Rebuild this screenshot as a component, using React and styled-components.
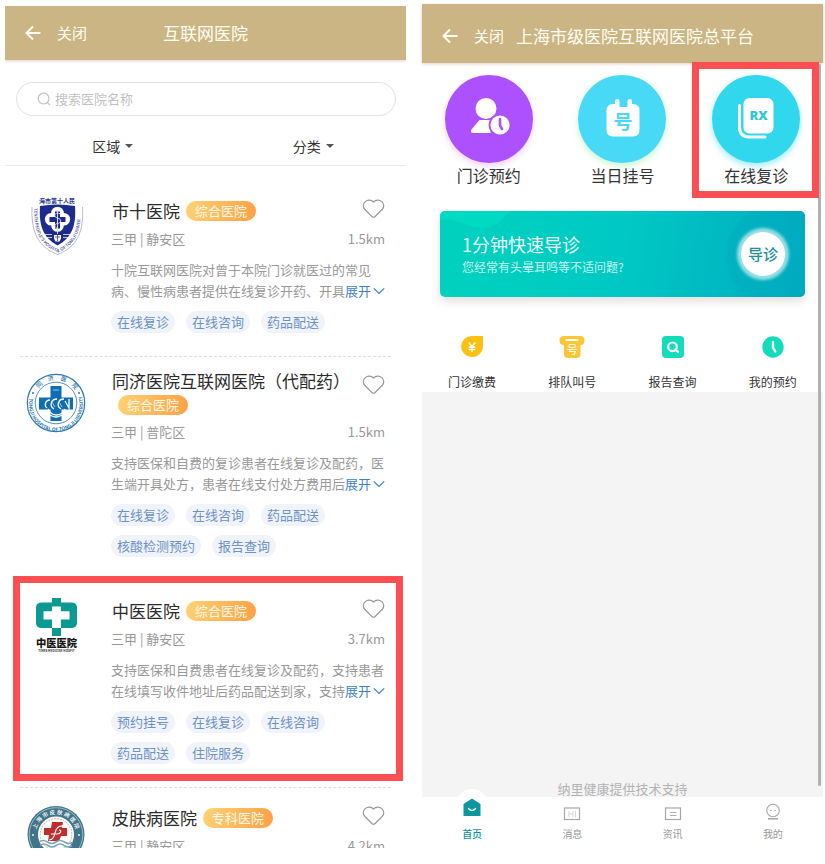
import React, { useState } from 'react';
import styled, { createGlobalStyle, css } from 'styled-components';

const GlobalStyle = createGlobalStyle`
  * {
    box-sizing: border-box;
  }
  body {
    margin: 0;
    background-color: #fff;
    color: #333;
    font-family: 'Noto Sans CJK SC', 'Noto Sans', sans-serif;
  }
  h1, h2, p, ul {
    margin: 0;
    padding: 0;
    font-weight: 400;
  }
  li {
    list-style: none;
  }
  a {
    color: inherit;
    text-decoration: none;
  }
  button, input, select {
    font: inherit;
    color: inherit;
    background: none;
    border: none;
    padding: 0;
    margin: 0;
  }
  button {
    cursor: pointer;
  }
  svg {
    display: block;
  }
`;

const Page = styled.main`
  display: grid;
  grid-template-columns: 1fr 1fr;
  gap: 16px;
  align-items: start;
  min-height: 100vh;
  padding: 0 2px 0 5px;
`;

const Phone = styled.section`
  display: flex;
  flex-direction: column;
  min-width: 0;
  ${(props) =>
    props.$clipped
      ? css`
          height: calc(100vh - 22px);
          margin-top: 6px;
          overflow: hidden;
        `
      : css`
          min-height: calc(100vh - 4px);
          margin-top: 4px;
        `}
`;

const TopBar = styled.header`
  position: relative;
  z-index: 1;
  display: grid;
  grid-template-columns: ${(props) => (props.$centered ? '1fr auto 1fr' : 'auto 1fr')};
  column-gap: 12px;
  align-items: center;
  flex-shrink: 0;
  height: ${(props) => (props.$centered ? 54 : 59)}px;
  padding: ${(props) => (props.$centered ? '0 20px' : '4px 20px 0')};
  background-color: #cbb584;
  color: #fffdf2;
  box-shadow: 0 1px 3px rgba(160, 120, 90, 0.35);
`;

const BarActions = styled.div`
  display: flex;
  align-items: center;
  gap: 16px;
  button {
    font-size: 15px;
    line-height: 22px;
  }
`;

const BarTitle = styled.h1`
  font-size: 17px;
  line-height: 24px;
  white-space: nowrap;
`;

const SearchBox = styled.label`
  display: flex;
  align-items: center;
  gap: 4px;
  flex-shrink: 0;
  height: 34px;
  margin: 22px 10px 0 11px;
  padding: 0 20px;
  border: 1px solid #e2e2e2;
  border-radius: 17px;
`;

const SearchInput = styled.input`
  flex: 1;
  min-width: 0;
  font-size: 13px;
  line-height: 20px;
  outline: none;
  &::placeholder {
    color: #c2c2c2;
    opacity: 1;
  }
`;

const Filters = styled.div`
  display: grid;
  grid-template-columns: 1fr 1fr;
  flex-shrink: 0;
  height: 50px;
  padding-top: 11px;
  border-bottom: 1px solid #e9e9e9;
`;

const FilterLabel = styled.label`
  display: flex;
  justify-content: center;
  align-items: center;
  height: 38px;
  padding-left: 15px;
`;

const FilterSelect = styled.select`
  appearance: none;
  padding-right: 13px;
  font-size: 14px;
  line-height: 20px;
  cursor: pointer;
`;

const Caret = styled.span`
  width: 0;
  margin-left: -8px;
  border: 4px solid transparent;
  border-top: 4px solid #555;
  border-bottom: none;
  pointer-events: none;
`;

const HospitalList = styled.ul`
  flex-shrink: 0;
  padding: 15px 15px 0;
`;

const HospitalItem = styled.li`
  position: relative;
  display: flex;
  gap: 25px;
  padding: 12px 6px 23px;
  border-bottom: 1px dashed #dedede;
`;

const Logo = styled.svg`
  flex: 0 0 60px;
  width: 60px;
  height: 60px;
  margin-top: 4px;
  overflow: visible;
  font-family: 'Noto Sans CJK SC', sans-serif;
`;

const Info = styled.div`
  flex: 1;
  min-width: 0;
`;

const Head = styled.div`
  display: flex;
  justify-content: space-between;
`;

const Names = styled.div`
  display: flex;
  flex-wrap: wrap;
  align-items: center;
  padding-left: 1px;
  padding-top: ${(props) => (props.$wrapped ? 0 : 6)}px;
  margin-bottom: ${(props) => (props.$wrapped ? 5 : 6)}px;
`;

const Name = styled.h2`
  font-size: 17px;
  line-height: 24px;
  color: #2b2b2b;
  white-space: nowrap;
`;

const Badge = styled.span`
  height: 20px;
  margin: 2px 0 2px 6px;
  padding: 0 9px;
  border-radius: 10px;
  background-image: linear-gradient(100deg, #ffd274, #ffa046);
  color: #fffbea;
  font-size: 13px;
  line-height: 19px;
`;

const Like = styled.button`
  align-self: flex-start;
  margin-top: 6px;
`;

const Meta = styled.div`
  display: flex;
  justify-content: space-between;
  color: #999;
  font-size: 13px;
  line-height: 20px;
`;

const Desc = styled.div`
  position: relative;
  margin-top: 10px;
  color: #999;
  font-size: 13px;
  line-height: 21px;
`;

const Expand = styled.button`
  position: absolute;
  right: 0;
  bottom: 0;
  display: flex;
  align-items: center;
  gap: 2px;
  background-color: #fff;
  color: #3c7fd0;
`;

const Tags = styled.ul`
  display: flex;
  flex-wrap: wrap;
  gap: 9px 11px;
  margin-top: 10px;
`;

const Tag = styled.li`
  padding: 0 6px;
  border-radius: 11px;
  background-color: #f1f3fa;
  color: #6b92c8;
  font-size: 13px;
  line-height: 22px;
`;

// red frame drawn over the thing the reader should tap
const Frame = styled.span`
  position: absolute;
  inset: ${(props) => props.$inset};
  z-index: 2;
  border: 7px solid #fc4f54;
  pointer-events: none;
`;

const Content = styled.div`
  position: relative;
  flex: 1;
  display: flex;
  flex-direction: column;
  justify-content: space-between;
  background-color: #f4f4f4;
`;

const Panel = styled.div`
  padding-bottom: 1px;
  background-color: #fff;
`;

const ScrollThumb = styled.span`
  position: absolute;
  top: 1px;
  right: 2px;
  bottom: 11px;
  width: 3px;
  border-radius: 2px;
  background-color: #b1b1b3;
`;

const Entries = styled.nav`
  display: grid;
  grid-template-columns: repeat(3, 1fr);
  padding-top: 12px;
`;

const Entry = styled.a`
  position: relative;
  display: flex;
  flex-direction: column;
  align-items: center;
  gap: 2px;
  font-size: 16px;
  line-height: 20px;
`;

const Disc = styled.span`
  display: block;
  width: 88px;
  height: 88px;
  border-radius: 50%;
  background-color: ${(props) => props.$color};
  box-shadow: 0 3px 6px ${(props) => props.$glow};
`;

const Banner = styled.section`
  position: relative;
  display: flex;
  justify-content: space-between;
  align-items: center;
  margin: 26px 18px 0;
  padding: 21px 20px 21px 22px;
  border-radius: 5px;
  background-image: linear-gradient(100deg, #00d5bf, #00c8c4 50%, #00abc0);
  box-shadow: 0 5px 9px rgba(120, 90, 90, 0.18);
  color: #effffc;
  overflow: hidden;
`;

const Waves = styled.svg`
  position: absolute;
  inset: 0;
  width: 100%;
  height: 100%;
`;

const BannerText = styled.div`
  position: relative;
  h2 {
    font-size: 18px;
    line-height: 24px;
  }
  p {
    margin-top: 2px;
    font-size: 12px;
    line-height: 18px;
    color: #c9f6f0;
  }
`;

const GuideButton = styled.button`
  position: relative;
  width: 44px;
  height: 44px;
  border-radius: 50%;
  background-color: #fff;
  box-shadow: 0 0 3px 4px rgba(255, 255, 255, 0.6);
  color: #1e9297;
  font-size: 15px;
  font-weight: 500;
  line-height: 44px;
  white-space: nowrap;
`;

const Services = styled.nav`
  display: grid;
  grid-template-columns: repeat(4, 1fr);
  padding-top: 38px;
`;

const Service = styled.a`
  display: flex;
  flex-direction: column;
  align-items: center;
  gap: 14px;
  font-size: 12px;
  line-height: 18px;
`;

const Support = styled.p`
  text-align: center;
  color: #b3b3b3;
  font-size: 13px;
  line-height: 16px;
`;

const TabBar = styled.nav`
  display: grid;
  grid-template-columns: repeat(4, 1fr);
  height: 67px;
  padding-top: 4px;
  background-color: #fff;
`;

const Tab = styled.a`
  position: relative;
  display: flex;
  flex-direction: column;
  align-items: center;
  gap: 2px;
  color: #999;
  font-size: 10px;
  line-height: 14px;

  svg {
    position: relative;
    overflow: visible;
  }

  ${(props) =>
    props.$active &&
    css`
      color: #0b979d;
      font-weight: 500;
      &::before {
        content: '';
        position: absolute;
        top: -12px;
        width: 34px;
        height: 34px;
        border-radius: 50%;
        background-color: #fff;
      }
    `}
`;

const BackIcon = () => (
  <svg width="16" height="16" viewBox="0 0 16 16" fill="none" stroke="currentColor" strokeWidth="2">
    <path d="M15.5 8H1.8M8 1.5 1.5 8 8 14.5" />
  </svg>
);

const SearchIcon = () => (
  <svg width="14" height="14" viewBox="0 0 14 14" fill="none" stroke="#c2c2c2" strokeWidth="1.2">
    <circle cx="6.6" cy="6.6" r="5.4" />
    <path d="m10.4 10.6 2.4 2.4" />
  </svg>
);

const HeartIcon = () => (
  <svg width="23" height="20" viewBox="0 0 23 20" fill="none" stroke="#999" strokeWidth="1.2">
    <path
      d="M11.5 3C9.3.7 5.700.5 3.200 2.600.7 4.900.6 8.200 2.900 10.500l7 7c.9.8 2.300.8 3.200 0l7-7c2.300-2.300 2.200-5.600-.3-7.900C17.300.5 13.700.7 11.500 3Z"
      strokeLinejoin="round"
    />
  </svg>
);

const ChevronIcon = () => (
  <svg width="12" height="8" viewBox="0 0 12 8" fill="none" stroke="currentColor" strokeWidth="1.2">
    <path d="m.8 1.300 5.200 5.200 5.200-5.200" />
  </svg>
);

const ShiyuanLogo = () => (
  <Logo viewBox="0 0 60 60">
    <defs>
      <path id="shieldSide" d="M8.300 11C7.500 33 13 48 32 55.500 50 48 56 33 54.700 9" />
    </defs>
    <text x="31" y="6" fontSize="6" fontWeight="700" textAnchor="middle" fill="#27368a">
      海市第十人民
    </text>
    <path d="M6 10C5 35 12 50 31.500 57.500 51 50 58 35 56.500 10" fill="none" stroke="#98a1ca" strokeWidth=".7" />
    <text fontSize="4.300" fontWeight="500" fill="#3d4b98">
      <textPath href="#shieldSide">TENTH PEOPLE'S HOSPITAL OF TONGJI UNIVER</textPath>
    </text>
    <path d="M14 9q17.500-3 35 0c1.200 19-2.500 31-17.500 39.500C16.500 40 12.800 28 14 9Z" fill="#1c2b8c" />
    <g fill="#fff">
      <circle cx="31.500" cy="16" r="6.300" />
      <circle cx="31.500" cy="28.500" r="6.300" />
      <circle cx="25.200" cy="22.200" r="6.300" />
      <circle cx="37.800" cy="22.200" r="6.300" />
      <path d="M28 38h7v3.500l-1.500 3h-4l-1.500-3ZM18 37h8v.8h-8zM37 37h8v.8h-8zM20 40h6v.8h-6zM37 40h6v.8h-6z" />
    </g>
    <path d="M29 14.500h5v5.500h5.500v5H34v6.500h-5V25h-5.500v-5H29Z" fill="#1c2b8c" />
    <path
      d="M31.500 13v24M35 17c-7-3-8 3-3.500 4s4 5 0 5.500-3 4 0 5"
      fill="none"
      stroke="#d4dbf8"
      strokeWidth="1"
    />
    <path d="M29 40h5M31.500 38v6" stroke="#1c2b8c" strokeWidth=".7" />
  </Logo>
);

const TongjiLogo = () => (
  <Logo viewBox="0 0 60 60">
    <defs>
      <path id="tongjiTop" d="M11.500 17A22.500 22.500 0 0 1 49 17" />
      <path id="tongjiBottom" d="M4.800 21.500A27 27 0 1 0 55.200 21.500" />
    </defs>
    <g fill="none" stroke="#2d79ad">
      <circle cx="30" cy="30" r="28.700" strokeWidth="1.200" />
      <circle cx="30" cy="30" r="20.800" strokeWidth=".8" />
    </g>
    <text fontSize="6" fontWeight="500" fill="#2d79ad">
      <textPath href="#tongjiTop" startOffset="2">
        同　济　医　院
      </textPath>
    </text>
    <text fontSize="4.800" fontWeight="700" fill="#2d79ad">
      <textPath href="#tongjiBottom" startOffset="4">
        TONGJI HOSPITAL OF TONGJI UNIVERSITY
      </textPath>
    </text>
    <circle cx="7" cy="20" r="1" fill="#2d79ad" />
    <circle cx="53" cy="20" r="1" fill="#2d79ad" />
    <path d="M24.500 13h11v11.500H47v12H35.500V48h-11V36.500H13v-12h11.500Z" fill="#0e6db4" />
    <g fill="none" stroke="#fff" strokeWidth="1.300">
      <path d="M24 27c-5 0-6 6-3 8M31 26c-6 0-8 7-3 10M38 26c-6 0-8 7-3 10M43 26v9l-4-7M22 36c4 8 13 8 17 0M24 42q6 4 12 0" />
    </g>
    <path d="M27 17h6M26 29l3 5M33 29l3 5" stroke="#9cc8e6" strokeWidth="1" />
  </Logo>
);

const ZhongyiLogo = () => (
  <Logo viewBox="0 0 60 60">
    <path
      d="M26 1h9v4.500h10q6 0 6 5V26q0 5-6 5H35v8h-9v-8H16q-6 0-6-5V10.500q0-5 6-5h10Z"
      fill="#0b9a92"
    />
    <path d="M26 9.500h9v4.800h8.500v8.200H35V31h-9v-8.500h-8.500v-8.200H26Z" fill="#fff" />
    <text x="30.500" y="50" fontSize="10.300" fontWeight="900" textAnchor="middle" fill="#171717">
      中医医院
    </text>
    <text x="30.500" y="54.500" fontSize="3" fontWeight="700" textAnchor="middle" fill="#333">
      TIMES MEDICINE HOSPIT
    </text>
  </Logo>
);

const PifuLogo = () => (
  <Logo viewBox="0 0 60 60">
    <defs>
      <path id="pifuTop" d="M10.500 37A20.500 20.500 0 1 1 49.500 37" />
    </defs>
    <circle cx="30" cy="30.500" r="28.500" fill="#3f7489" />
    <circle cx="30" cy="30.500" r="26.800" fill="none" stroke="#c6d8df" strokeWidth=".7" />
    <circle cx="30" cy="30.500" r="18" fill="#fff" />
    <circle cx="30" cy="30.500" r="15.800" fill="none" stroke="#c8b98a" strokeWidth="1" strokeDasharray="2 1" />
    <text fontSize="5.600" fontWeight="500" fill="#fff" textAnchor="middle">
      <textPath href="#pifuTop" startOffset="50%">
        上 海 市 皮 肤 病 医 院
      </textPath>
    </text>
    <circle cx="7" cy="31" r=".9" fill="#fff" />
    <circle cx="53" cy="31" r=".9" fill="#fff" />
    <path d="M26 18h11l-1 6h5v8h-6l-2 5H22l1-6h-5v-7h7Z" fill="#c02d2c" />
    <path d="M38 22c-5-1-8 2-9 7s-3 7-6 7M25 30h6c4 0 5-4 2-4" fill="none" stroke="#fff" strokeWidth="1.200" />
    <path
      d="M13 38q4-3 8.500 0t8.500 0 8.500 0 8.500 0M14 41.500q4-3 8 0t8 0 8 0 8 0"
      fill="none"
      stroke="#7ba7b8"
      strokeWidth="1.600"
    />
  </Logo>
);

const BookIcon = () => (
  <svg width="88" height="88" viewBox="0 0 88 88" fill="#fff">
    <circle cx="41" cy="33.500" r="10.500" />
    <path d="M34.500 45h13l-2 13H28.500q-3.500 0-2-3.500Z" strokeLinejoin="round" />
    <circle cx="55" cy="50" r="10.500" stroke="#ad50fd" strokeWidth="1.800" />
    <path d="M55 44v6.500l2 3.500" fill="none" stroke="#ad50fd" strokeWidth="2.600" strokeLinecap="round" />
  </svg>
);

const TodayIcon = () => (
  <svg width="88" height="88" viewBox="0 0 88 88">
    <rect x="37" y="24" width="4.500" height="10" rx="2.200" fill="#fff" />
    <rect x="49.500" y="24" width="4.500" height="10" rx="2.200" fill="#fff" />
    <path d="M35 29h3.500q.5 3 3 3h7q2.500 0 3-3H55q6.500 0 6.500 6.500v19q0 7-6.500 7H35q-6.500 0-6.500-7v-19Q28.500 29 35 29Z" fill="#fff" />
    <text x="45" y="54" fontSize="19" fontWeight="700" textAnchor="middle" fill="#48d9f7">
      号
    </text>
  </svg>
);

const RxIcon = () => (
  <svg width="88" height="88" viewBox="0 0 88 88">
    <rect x="31.500" y="23" width="30" height="35.500" rx="6" fill="#fff" />
    <path d="M27.500 30.500V52q0 10 10 10h15.500" fill="none" stroke="#fff" strokeWidth="3" strokeLinecap="round" />
    <text
      x="46.500"
      y="45"
      fontSize="13"
      fontWeight="900"
      textAnchor="middle"
      fill="#31c5d8"
      fontFamily="'Open Sans', 'DejaVu Sans', sans-serif"
    >
      RX
    </text>
  </svg>
);

const PayIcon = () => (
  <svg width="24" height="24" viewBox="0 0 24 24">
    <path d="M12 1h11v11.500A11 10.500 0 1 1 12 1Z" fill="#fcc011" />
    <path d="m8.700 7.500 3.300 4 3.300-4M12 11.500v5.500M8.700 12h6.600M8.700 14.500h6.600" fill="none" stroke="#fff" strokeWidth="1.400" />
  </svg>
);

const QueueIcon = () => (
  <svg width="26" height="24" viewBox="0 0 26 24">
    <path d="M5 1h16q4.500 0 4.500 4.500T21.500 10v9q0 4-4 4H9q-4 0-4-4v-9Q.5 10 .5 5.500T5 1Z" fill="#fcc636" />
    <path d="M7.500 5h11" stroke="#fff" strokeWidth="2" strokeLinecap="round" />
    <text x="13.200" y="18.500" fontSize="11" textAnchor="middle" fill="#fff">
      号
    </text>
  </svg>
);

const ReportIcon = () => (
  <svg width="24" height="24" viewBox="0 0 24 24" fill="none">
    <rect x="1" y="1" width="22" height="22" rx="4" fill="#13dcbb" />
    <circle cx="11.500" cy="11.800" r="4.300" stroke="#fff" strokeWidth="2.200" />
    <path d="m14.500 14.500 2.500 2.500" stroke="#fff" strokeWidth="2.200" strokeLinecap="round" />
  </svg>
);

const ClockIcon = () => (
  <svg width="24" height="24" viewBox="0 0 24 24" fill="none">
    <circle cx="12" cy="12" r="10.700" fill="#13dcbb" />
    <path d="M12 7v5.500l2.200 4" stroke="#fff" strokeWidth="2.400" strokeLinecap="round" />
  </svg>
);

const HomeTabIcon = () => (
  <svg width="24" height="24" viewBox="0 0 24 24" fill="none">
    <path d="M12-2.500 20.500 3v12h-17V3Z" fill="#0b979d" />
    <path d="M8.500 7.500q3.500 4 7 0" stroke="#fff" strokeWidth="1.300" strokeLinecap="round" />
  </svg>
);

const MessageTabIcon = () => (
  <svg width="24" height="24" viewBox="0 0 24 24" fill="none">
    <rect x="4.500" y="7" width="15" height="11.500" stroke="#a8a8a8" strokeWidth="1.200" />
    <path d="M9 10v6M13 10v6M9 13h4M15.500 10v6" stroke="#c9c9c9" strokeWidth=".8" />
  </svg>
);

const NewsTabIcon = () => (
  <svg width="24" height="24" viewBox="0 0 24 24" fill="none">
    <rect x="4.500" y="7" width="15" height="11.500" stroke="#a8a8a8" strokeWidth="1.200" />
    <path d="M9 11.500h6.500M9 14.500h6.500" stroke="#a8a8a8" strokeWidth=".9" />
  </svg>
);

const MineTabIcon = () => (
  <svg width="24" height="24" viewBox="0 0 24 24" fill="none" stroke="#a5a5a5">
    <circle cx="12" cy="9.500" r="6.300" strokeWidth="1.100" />
    <path d="M7 17.800h10" strokeWidth="1.500" />
    <path d="M9 9.500h1.500M13.500 9.500H15" strokeWidth="1.100" />
  </svg>
);

const hospitals = [
  {
    logo: ShiyuanLogo,
    name: '市十医院',
    type: '综合医院',
    area: '静安区',
    distance: '1.5km',
    desc: '十院互联网医院对曾于本院门诊就医过的常见病、慢性病患者提供在线复诊开药、开具',
    tags: ['在线复诊', '在线咨询', '药品配送'],
  },
  {
    logo: TongjiLogo,
    name: '同济医院互联网医院（代配药）',
    wrapped: true,
    type: '综合医院',
    area: '普陀区',
    distance: '1.5km',
    desc: '支持医保和自费的复诊患者在线复诊及配药，医生端开具处方，患者在线支付处方费用后',
    tags: ['在线复诊', '在线咨询', '药品配送', '核酸检测预约', '报告查询'],
  },
  {
    logo: ZhongyiLogo,
    name: '中医医院',
    framed: true,
    type: '综合医院',
    area: '静安区',
    distance: '3.7km',
    desc: '支持医保和自费患者在线复诊及配药，支持患者在线填写收件地址后药品配送到家，支持',
    tags: ['预约挂号', '在线复诊', '在线咨询', '药品配送', '住院服务'],
  },
  {
    logo: PifuLogo,
    name: '皮肤病医院',
    type: '专科医院',
    area: '静安区',
    distance: '4.2km',
  },
];

const entries = [
  { label: '门诊预约', icon: BookIcon, color: '#ad50fd', glow: 'rgba(190, 110, 240, 0.3)' },
  { label: '当日挂号', icon: TodayIcon, color: '#48d9f7', glow: 'rgba(140, 240, 160, 0.5)' },
  { label: '在线复诊', icon: RxIcon, color: '#30d7ed', glow: 'rgba(60, 220, 240, 0.5)', framed: true },
];

const services = [
  { label: '门诊缴费', icon: PayIcon },
  { label: '排队叫号', icon: QueueIcon },
  { label: '报告查询', icon: ReportIcon },
  { label: '我的预约', icon: ClockIcon },
];

const tabs = [
  { label: '首页', icon: HomeTabIcon },
  { label: '消息', icon: MessageTabIcon },
  { label: '资讯', icon: NewsTabIcon },
  { label: '我的', icon: MineTabIcon },
];

function Header({ title, centered }) {
  return (
    <TopBar $centered={centered}>
      <BarActions>
        <button type="button" aria-label="返回">
          <BackIcon />
        </button>
        <button type="button">关闭</button>
      </BarActions>
      <BarTitle>{title}</BarTitle>
    </TopBar>
  );
}

function Filter({ label }) {
  return (
    <FilterLabel>
      <FilterSelect aria-label={label}>
        <option>{label}</option>
      </FilterSelect>
      <Caret />
    </FilterLabel>
  );
}

function Hospital({ item }) {
  const HospitalLogo = item.logo;
  return (
    <HospitalItem>
      <HospitalLogo />
      <Info>
        <Head>
          <Names $wrapped={item.wrapped}>
            <Name>{item.name}</Name>
            <Badge>{item.type}</Badge>
          </Names>
          <Like type="button" aria-label="收藏">
            <HeartIcon />
          </Like>
        </Head>
        <Meta>
          <span>三甲 | {item.area}</span>
          <span>{item.distance}</span>
        </Meta>
        {item.desc && (
          <Desc>
            <p>{item.desc}</p>
            <Expand type="button">
              展开
              <ChevronIcon />
            </Expand>
          </Desc>
        )}
        {item.tags && (
          <Tags>
            {item.tags.map((tag) => (
              <Tag key={tag}>{tag}</Tag>
            ))}
          </Tags>
        )}
      </Info>
      {item.framed && <Frame $inset="-5px -12px 6px -7px" />}
    </HospitalItem>
  );
}

export default function App() {
  const [keyword, setKeyword] = useState('');
  const [tabIndex, setTabIndex] = useState(0);

  return (
    <>
      <GlobalStyle />
      <Page>
        <Phone $clipped>
          <Header title="互联网医院" centered />
          <SearchBox>
            <SearchIcon />
            <SearchInput
              aria-label="搜索医院名称"
              placeholder="搜索医院名称"
              value={keyword}
              onChange={(e) => setKeyword(e.target.value)}
            />
          </SearchBox>
          <Filters>
            <Filter label="区域" />
            <Filter label="分类" />
          </Filters>
          <HospitalList>
            {hospitals.map((item) => (
              <Hospital key={item.name} item={item} />
            ))}
          </HospitalList>
        </Phone>

        <Phone>
          <Header title="上海市级医院互联网医院总平台" />
          <Content>
            <Panel>
              <Entries>
                {entries.map(({ label, icon: Icon, color, glow, framed }) => (
                  <Entry key={label} href="#">
                    <Disc $color={color} $glow={glow}>
                      <Icon />
                    </Disc>
                    {label}
                    {framed && <Frame $inset="-13px 4px -13px 3px" />}
                  </Entry>
                ))}
              </Entries>
              <Banner>
                <Waves viewBox="0 0 365 86" preserveAspectRatio="none">
                  <path d="M0 9q12-2 24 4t26 3Q60 13 70 0H0Z" fill="#00e0c5" opacity=".6" />
                  <path d="M70 0q40-2 45 40 2 26-10 46H17Q8 78 0 79V9q12-2 24 4t26 3Q60 13 70 0Z" fill="#00cdbd" opacity=".5" />
                  <circle cx="337" cy="44" r="51" fill="#00a8bd" opacity=".3" />
                </Waves>
                <BannerText>
                  <h2>1分钟快速导诊</h2>
                  <p>您经常有头晕耳鸣等不适问题?</p>
                </BannerText>
                <GuideButton type="button">导诊</GuideButton>
              </Banner>
              <Services>
                {services.map(({ label, icon: Icon }) => (
                  <Service key={label} href="#">
                    <Icon />
                    {label}
                  </Service>
                ))}
              </Services>
            </Panel>
            <Support>纳里健康提供技术支持</Support>
            <ScrollThumb />
          </Content>
          <TabBar>
            {tabs.map(({ label, icon: Icon }, idx) => (
              <Tab key={label} href="#" $active={tabIndex === idx} onClick={() => setTabIndex(idx)}>
                <Icon />
                {label}
              </Tab>
            ))}
          </TabBar>
        </Phone>
      </Page>
    </>
  );
}
